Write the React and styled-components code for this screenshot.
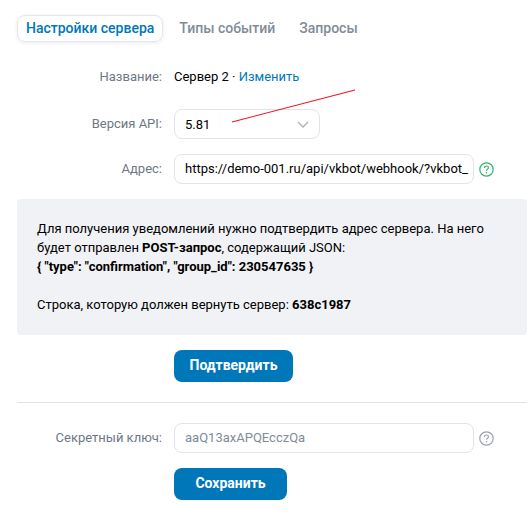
import React from "react";
import styled, { createGlobalStyle } from "styled-components";

const GlobalStyle = createGlobalStyle`
	html, body {
		margin: 0;
		padding: 0;
		background: #fff;
		overflow: hidden;
	}
	body {
		font-family: Roboto, "Liberation Sans", sans-serif;
		font-size: 13px;
		color: #000;
	}
`;

const Page = styled.div`
	position: relative;
	width: 527px;
	height: 517px;
	padding: 15px 0 0 17px;
	box-sizing: border-box;
`;

const Tabs = styled.div`
	display: flex;
	align-items: center;
	gap: 6px;
	margin-bottom: 26px;
`;

const Tab = styled.div`
	height: 27px;
	line-height: 25px;
	box-sizing: border-box;
	padding: 0 8px;
	margin-right: ${p => (p.$active ? 1 : 0)}px;
	border-radius: 8px;
	font-size: 14px;
	font-weight: 500;
	border: 1px solid ${p => (p.$active ? "#e3e6ea" : "transparent")};
	color: ${p => (p.$active ? "#0077b9" : "#818c99")};
	box-shadow: ${p => (p.$active ? "0 1px 4px rgba(0, 0, 0, 0.08)" : "none")};
`;

const Row = styled.div`
	display: grid;
	grid-template-columns: 145px auto;
	column-gap: 12px;
	justify-content: start;
	align-items: center;
	margin-bottom: ${p => p.$gap ?? 15}px;
`;

const Label = styled.div`
	text-align: right;
	color: #6d7885;
	line-height: 18px;
`;

const Value = styled.div`
	line-height: 18px;
`;

const Link = styled.span`
	color: #0077b9;
`;

const SelectBox = styled.div`
	width: 146px;
	height: 30px;
	box-sizing: border-box;
	border: 1px solid #e1e3e6;
	border-radius: 8px;
	padding: 0 10px;
	display: flex;
	align-items: center;
	justify-content: space-between;
	background: #fff;
`;

const FieldWrap = styled.div`
	display: flex;
	align-items: center;
	gap: 5px;
`;

const Field = styled.div`
	width: 300px;
	height: 30px;
	line-height: 28px;
	box-sizing: border-box;
	border: 1px solid #e1e3e6;
	border-radius: 8px;
	padding: 0 3px 0 10px;
	white-space: nowrap;
	color: ${p => (p.$muted ? "#818c99" : "#000")};
`;

const Notice = styled.div`
	box-sizing: border-box;
	padding: 20px 20px 21px;
	border-radius: 4px;
	background: #f0f2f5;
	line-height: 19px;
	margin: 0 0 15px;
`;

const Actions = styled.div`
	padding-left: 157px;
	height: 32px;
`;

const Button = styled.div`
	height: 32px;
	line-height: 31px;
	border-radius: 8px;
	background: #0077b9;
	color: #fff;
	font-weight: 700;
	font-size: 14px;
	width: ${p => p.$width}px;
	text-align: center;
`;

const Divider = styled.div`
	height: 1px;
	background: #e1e3e6;
	margin: 20px 0;
`;

const Stroke = styled.svg`
	position: absolute;
	left: 225px;
	top: 85px;
	pointer-events: none;
`;

const Chevron = () => (
	<svg width="12" height="7" viewBox="0 0 12 7" fill="none">
		<path d="M1 1l5 5 5-5" stroke="#aeb7c2" strokeWidth="1.5" />
	</svg>
);

const HintIcon = ({ color }) => (
	<svg width="15" height="15" viewBox="0 0 15 15" fill="none">
		<circle cx="7.5" cy="7.5" r="6.7" stroke={color} strokeWidth="1.2" />
		<path d="M5.5 5.9c0-1.1.9-1.9 2-1.9s2 .8 2 1.8c0 1.4-2 1.5-2 3" stroke={color} strokeWidth="1.1" />
		<circle cx="7.5" cy="10.8" r="0.75" fill={color} />
	</svg>
);

export default function App() {
	return (
		<Page>
			<GlobalStyle />
			<Tabs>
				<Tab $active>Настройки сервера</Tab>
				<Tab>Типы событий</Tab>
				<Tab>Запросы</Tab>
			</Tabs>

			<Row $gap={23}>
				<Label>Название:</Label>
				<Value>
					Сервер 2 · <Link>Изменить</Link>
				</Value>
			</Row>

			<Row>
				<Label>Версия API:</Label>
				<SelectBox>
					<span>5.81</span>
					<Chevron />
				</SelectBox>
			</Row>

			<Row>
				<Label>Адрес:</Label>
				<FieldWrap>
					<Field>https://demo-001.ru/api/vkbot/webhook/?vkbot_</Field>
					<HintIcon color="#2cb76a" />
				</FieldWrap>
			</Row>

			<Notice>
				Для получения уведомлений нужно подтвердить адрес сервера. На него
				<br />
				будет отправлен <b>POST-запрос</b>, содержащий JSON:
				<br />
				<b>{'{ "type": "confirmation", "group_id": 230547635 }'}</b>
				<br />
				<br />
				Строка, которую должен вернуть сервер: <b>638c1987</b>
			</Notice>

			<Actions>
				<Button $width={119}>Подтвердить</Button>
			</Actions>

			<Divider />

			<Row>
				<Label>Секретный ключ:</Label>
				<FieldWrap>
					<Field $muted>aaQ13axAPQEcczQa</Field>
					<HintIcon color="#99a2ad" />
				</FieldWrap>
			</Row>

			<Actions>
				<Button $width={113}>Сохранить</Button>
			</Actions>

			<Stroke width="135" height="42" viewBox="0 0 135 42">
				<path d="M7 37L130 5" stroke="#f0141e" strokeWidth="1.1" />
			</Stroke>
		</Page>
	);
}
